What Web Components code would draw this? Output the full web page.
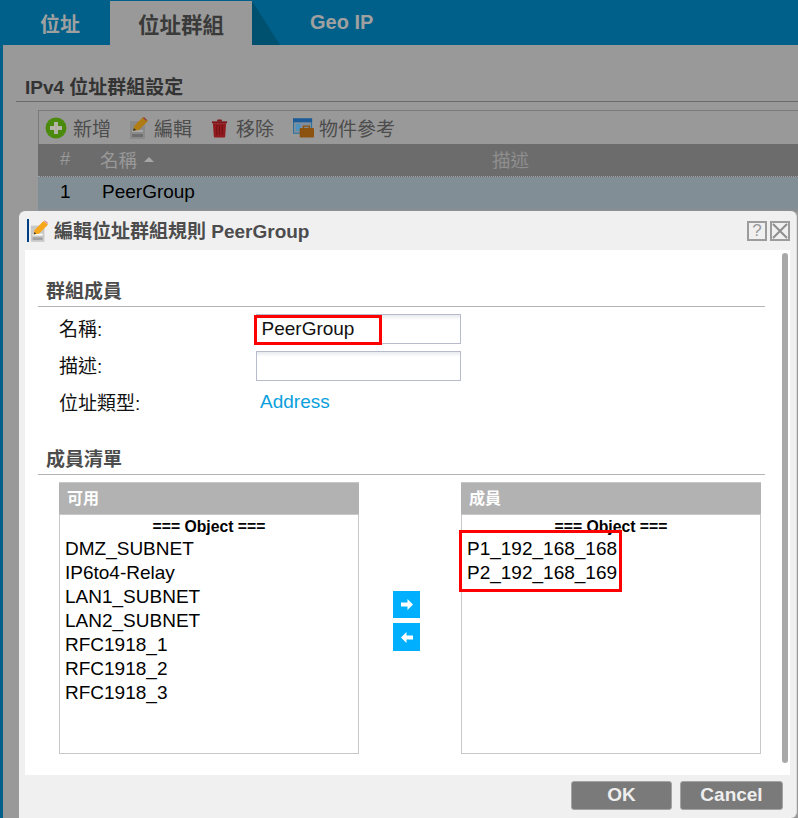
<!DOCTYPE html>
<html>
<head>
<meta charset="utf-8">
<style>
  html, body { margin: 0; height: 100%; overflow: hidden; }
  body {
    background: #006089;
    font: 19px "Liberation Sans", "Noto Sans CJK TC", sans-serif;
    color: #000;
    position: relative;
  }
</style>
</head>
<body>

<ui-tabs>
  <ui-tab>位址</ui-tab>
  <ui-tab active>位址群組</ui-tab>
  <ui-tab geo>Geo IP</ui-tab>
</ui-tabs>

<ui-page heading="IPv4 位址群組設定">
  <ui-toolbar>
    <ui-tool icon="add">新增</ui-tool>
    <ui-tool icon="edit">編輯</ui-tool>
    <ui-tool icon="trash">移除</ui-tool>
    <ui-tool icon="ref">物件參考</ui-tool>
  </ui-toolbar>
  <ui-grid></ui-grid>
</ui-page>

<ui-dialog heading="編輯位址群組規則 PeerGroup">
  <ui-section heading="群組成員" style="margin-top:28px"></ui-section>
  <ui-field label="名稱:" kind="input">PeerGroup<ui-mark slot="over" style="left:-3px;top:0;width:128px;height:30px"></ui-mark></ui-field>
  <ui-field label="描述:" kind="input"></ui-field>
  <ui-field label="位址類型:" kind="link">Address</ui-field>

  <ui-section heading="成員清單" style="margin-top:28px"></ui-section>
  <ui-members>
    <ui-listbox slot="left" heading="可用">
      <div>DMZ_SUBNET</div>
      <div>IP6to4-Relay</div>
      <div>LAN1_SUBNET</div>
      <div>LAN2_SUBNET</div>
      <div>RFC1918_1</div>
      <div>RFC1918_2</div>
      <div>RFC1918_3</div>
    </ui-listbox>
    <ui-listbox slot="right" heading="成員">
      <div>P1_192_168_168</div>
      <div>P2_192_168_169</div>
      <ui-mark slot="over" style="left:-3px;top:47px;width:163px;height:62px"></ui-mark>
    </ui-listbox>
  </ui-members>

  <ui-button slot="foot" style="width:101px">OK</ui-button>
  <ui-button slot="foot" style="width:103px">Cancel</ui-button>
</ui-dialog>

<script>
  // small helper, every element gets an open shadow root from a string
  function shadow(el, html) {
    el.attachShadow({ mode: 'open' }).innerHTML = html;
  }

  const ICONS = {
    add: `<svg width="22" height="22" viewBox="0 0 22 22"><circle cx="11" cy="11" r="10.5" fill="#4a8a0c"/><path d="M11 5v12M5 11h12" stroke="#b4b4a8" stroke-width="4"/></svg>`,
    edit: `<svg width="18" height="22" viewBox="0 0 18 22"><rect x="0" y="4" width="15" height="18" fill="#8a8a8a"/><rect x="2" y="13" width="11" height="2" fill="#a8a8a8"/><rect x="2" y="17" width="11" height="3" fill="#6e6e6e"/><path d="M3 14l1-5L13 0l5 4-9 9z" fill="#b07c14"/><path d="M14 0l3 3-1 1-3-3z" fill="#8c3c46"/><path d="M3 14l1-3 2 2z" fill="#333"/></svg>`,
    trash: `<svg width="17" height="20" viewBox="0 0 18 20" style="margin-right:2px"><path d="M1 3h16v2H1z" fill="#7c1418"/><path d="M6 3l1-2h4l1 2z" fill="#7c1418"/><path d="M2 5h14l-1 14a1 1 0 0 1-1 1H4a1 1 0 0 1-1-1z" fill="#901a1e"/><path d="M6 7v10M9 7v10M12 7v10" stroke="#701014" stroke-width="1"/></svg>`,
    ref: `<svg width="21" height="20" viewBox="0 0 22 20" style="margin-right:-1px"><rect x="0.5" y="0.5" width="19" height="15" fill="#7f8e9c" stroke="#26709c"/><rect x="0" y="0" width="20" height="4" fill="#1c5a98"/><rect x="3" y="6" width="5" height="7" fill="#4e93bf"/><rect x="7" y="10" width="15" height="10" rx="1" fill="#8c5310"/><path d="M11 10V8h6v2" fill="none" stroke="#8c5310" stroke-width="1.5"/></svg>`,
    pencil: `<svg width="18" height="24" viewBox="0 0 20 24"><rect x="1" y="6" width="15" height="18" fill="#c8c8c8"/><rect x="3" y="15" width="11" height="2" fill="#fff"/><rect x="3" y="19" width="11" height="3" fill="#a2a2a2"/><path d="M4 16l1-5L15 1l5 4-10 10z" fill="#f5a81c"/><path d="M16 0l4 3-1 1-3-3z" fill="#e0607a"/><path d="M4 16l1-3 2 2z" fill="#444"/></svg>`
  };

  class UiTabs extends HTMLElement {
    constructor() {
      super();
      shadow(this, `<style>
        :host { display: flex; height: 45px; padding-left: 10px; box-sizing: border-box; }
      </style><slot></slot>`);
    }
  }

  class UiTab extends HTMLElement {
    constructor() {
      super();
      shadow(this, `<style>
        :host { display: flex; align-items: center; padding: 0 30px; color: #a0a0a0; font-weight: bold; font-size: 20px; margin-top: 1px; height: 44px; position: relative; }
        :host([active]) { background: #999; color: #3a3a3a; font-size: 21.5px; padding: 0 28px; margin-right: 28px; }
        :host([active])::after {
          content: ''; position: absolute; left: 100%; top: 0;
          width: 28px; height: 44px; background: #00506f;
          clip-path: polygon(0 0, 100% 100%, 0 100%);
        }
        :host([geo]) { margin-top: 0; }
      </style><slot></slot>`);
    }
  }

  class UiPage extends HTMLElement {
    constructor() {
      super();
      shadow(this, `<style>
        :host { display: block; margin-left: 3px; background: #999; height: 773px; overflow: hidden; }
        h2 { margin: 31px 0 0 13px; padding: 0 0 2px 9px; height: 23px; line-height: 23px; font-size: 19px; color: #333; border-bottom: 1px solid #6a6a6a; }
        .wrap { margin: 8px 0 0 35px; }
      </style>
      <h2>${this.getAttribute('heading')}</h2>
      <div class="wrap"><slot></slot></div>`);
    }
  }

  class UiToolbar extends HTMLElement {
    constructor() {
      super();
      shadow(this, `<style>
        :host { display: flex; align-items: center; gap: 19px; height: 33px; padding-left: 6px; border-top: 1px solid #7a7a7a; border-left: 1px solid #7a7a7a; }
      </style><slot></slot>`);
    }
  }

  class UiTool extends HTMLElement {
    constructor() {
      super();
      shadow(this, `<style>
        :host { display: flex; align-items: center; gap: 6px; color: #4c4c4c; font-size: 19px; }
        svg { display: block; }
      </style>${ICONS[this.getAttribute('icon')]}<span><slot></slot></span>`);
    }
  }

  class UiGrid extends HTMLElement {
    constructor() {
      super();
      shadow(this, `<style>
        :host { display: block; }
        .row { display: grid; grid-template-columns: 22px 410px 1fr; padding-left: 22px; align-items: center; }
        .row span { position: relative; top: -1px; }
        .head { height: 32px; background: #6c6c6c; color: #999; border-bottom: 1px dotted #a0a0a0; font-size: 18.5px; }
        .head .d { color: #8f8f8f; }
        .body { height: 32px; background: #818e95; color: #000; border-bottom: 3px solid #8b8f92; }
        .name { padding-left: 18px; display: flex; align-items: center; gap: 7px; }
        .sort { border: 5px solid transparent; border-top: 0; border-bottom: 5px solid #a6a6a6; width: 0; height: 0; }
        .body .name { padding-left: 20px; }
      </style>
      <div class="row head"><span>#</span><span class="name">名稱<i class="sort"></i></span><span class="d">描述</span></div>
      <div class="row body"><span>1</span><span class="name">PeerGroup</span><span></span></div>`);
    }
  }

  class UiDialog extends HTMLElement {
    constructor() {
      super();
      shadow(this, `<style>
        :host { position: absolute; left: 19px; top: 211px; width: 777px; bottom: 0; background: #f0f0f1; border-radius: 6px 6px 6px 0; display: flex; flex-direction: column; border-right: 1px solid #dcdcdc; box-sizing: content-box; }
        .head { height: 39px; display: flex; align-items: center; padding-left: 8px; flex: none; }
        .bar { width: 2px; height: 23px; background: #003f82; }
        .head svg { display: block; margin: 0 6px 0 1px; }
        .title { color: #4c4c4c; font-weight: bold; font-size: 19px; flex: 1; position: relative; top: -1px; }
        .btns { display: flex; gap: 3px; margin-right: 6px; }
        .sq { width: 16px; height: 16px; border: 2px solid #9c9c9c; display: flex; align-items: center; justify-content: center; color: #999; font-size: 17px; line-height: 16px; }
        .body { flex: 1; background: #fff; margin: 0 6px; padding-left: 13px; position: relative; overflow: hidden; }
        .inner { width: 727px; display: flow-root; }
        .thumb { position: absolute; right: 2px; top: 3px; bottom: 12px; width: 6px; border-radius: 3px; background: #a8a8a8; }
        .foot { height: 43px; flex: none; display: flex; justify-content: flex-end; gap: 8px; padding: 6px 13px 0 0; box-sizing: border-box; }
      </style>
      <div class="head">
        <div class="bar"></div>${ICONS.pencil}
        <div class="title">${this.getAttribute('heading')}</div>
        <div class="btns">
          <div class="sq">?</div>
          <div class="sq"><svg width="16" height="16" viewBox="0 0 16 16" style="margin:0"><path d="M1 1l14 14M15 1L1 15" stroke="#8e8e8e" stroke-width="2"/></svg></div>
        </div>
      </div>
      <div class="body"><div class="inner"><slot></slot></div><div class="thumb"></div></div>
      <div class="foot"><slot name="foot"></slot></div>`);
    }
  }

  class UiSection extends HTMLElement {
    constructor() {
      super();
      shadow(this, `<style>
        :host { display: block; height: 28px; line-height: 27px; padding-left: 8px; border-bottom: 1px solid #b4b4b4; font-weight: bold; font-size: 19px; color: #4c4c4c; }
      </style>${this.getAttribute('heading')}`);
    }
  }

  class UiField extends HTMLElement {
    constructor() {
      super();
      shadow(this, `<style>
        :host { display: flex; align-items: center; height: 30px; margin-top: 7px; padding-left: 21px; }
        .label { width: 197px; flex: none; color: #111; margin-top: -4px; }
        .input { width: 205px; height: 30px; box-sizing: border-box; border: 1px solid #b7bbcb; padding-left: 4.500px; line-height: 27px; position: relative; background: linear-gradient(#e8eaee, #fff 5px); color: #111; }
        .link { color: #0a9fdc; padding-left: 4px; margin-top: -3px; }
      </style>
      <div class="label">${this.getAttribute('label')}</div>
      <div class="${this.getAttribute('kind')}"><slot></slot><slot name="over"></slot></div>`);
    }
  }

  class UiMark extends HTMLElement {
    constructor() {
      super();
      shadow(this, `<style>
        :host { position: absolute; box-sizing: border-box; border: 3px solid #f00; display: block; }
      </style>`);
    }
  }

  class UiMembers extends HTMLElement {
    constructor() {
      super();
      shadow(this, `<style>
        :host { display: flex; margin: 7px 0 0 21px; }
        .arrows { width: 27px; margin: 109px 41px 0 34px; display: flex; flex-direction: column; gap: 5px; }
        .arrows div { background: #00b0ff; height: 27px; display: flex; align-items: center; justify-content: center; }
        .arrows div + div { height: 28px; }
        svg { display: block; }
      </style>
      <slot name="left"></slot>
      <div class="arrows">
        <div><svg width="12" height="11" viewBox="0 0 12 11"><path d="M0 3.5h6.5V0L12 5.5 6.5 11V7.500H0z" fill="#fff"/></svg></div>
        <div><svg width="12" height="11" viewBox="0 0 12 11"><path d="M12 3.500H5.500V0L0 5.500 5.500 11V7.500H12z" fill="#fff"/></svg></div>
      </div>
      <slot name="right"></slot>`);
    }
  }

  class UiListbox extends HTMLElement {
    constructor() {
      super();
      shadow(this, `<style>
        :host { display: block; width: 300px; height: 272px; box-sizing: border-box; border: 1px solid #c8c8c8; position: relative; }
        .head { height: 31px; margin: -1px -1px 0; background: #b2b2b2; color: #fff; font-weight: bold; font-size: 16px; line-height: 31px; padding-left: 8px; border-bottom: 1px solid #c8c8c8; border-top: 1px solid #c8c8c8; }
        .group { font-weight: bold; font-size: 15.75px; text-align: center; height: 22px; line-height: 23px; }
        .items { padding-left: 5px; line-height: 24px; color: #000; }
      </style>
      <div class="head">${this.getAttribute('heading')}</div>
      <div class="group">=== Object ===</div>
      <div class="items"><slot></slot></div>
      <slot name="over"></slot>`);
    }
  }

  class UiButton extends HTMLElement {
    constructor() {
      super();
      shadow(this, `<style>
        :host { display: block; height: 29px; box-sizing: border-box; width: 102px; background: #7a7a7a; border: 1px solid #a4a4a4; border-radius: 3px; color: #eee; font-weight: bold; font-size: 19px; line-height: 26px; text-align: center; }
      </style><slot></slot>`);
    }
  }

  customElements.define('ui-tabs', UiTabs);
  customElements.define('ui-tab', UiTab);
  customElements.define('ui-page', UiPage);
  customElements.define('ui-toolbar', UiToolbar);
  customElements.define('ui-tool', UiTool);
  customElements.define('ui-grid', UiGrid);
  customElements.define('ui-dialog', UiDialog);
  customElements.define('ui-section', UiSection);
  customElements.define('ui-field', UiField);
  customElements.define('ui-mark', UiMark);
  customElements.define('ui-members', UiMembers);
  customElements.define('ui-listbox', UiListbox);
  customElements.define('ui-button', UiButton);
</script>
</body>
</html>
